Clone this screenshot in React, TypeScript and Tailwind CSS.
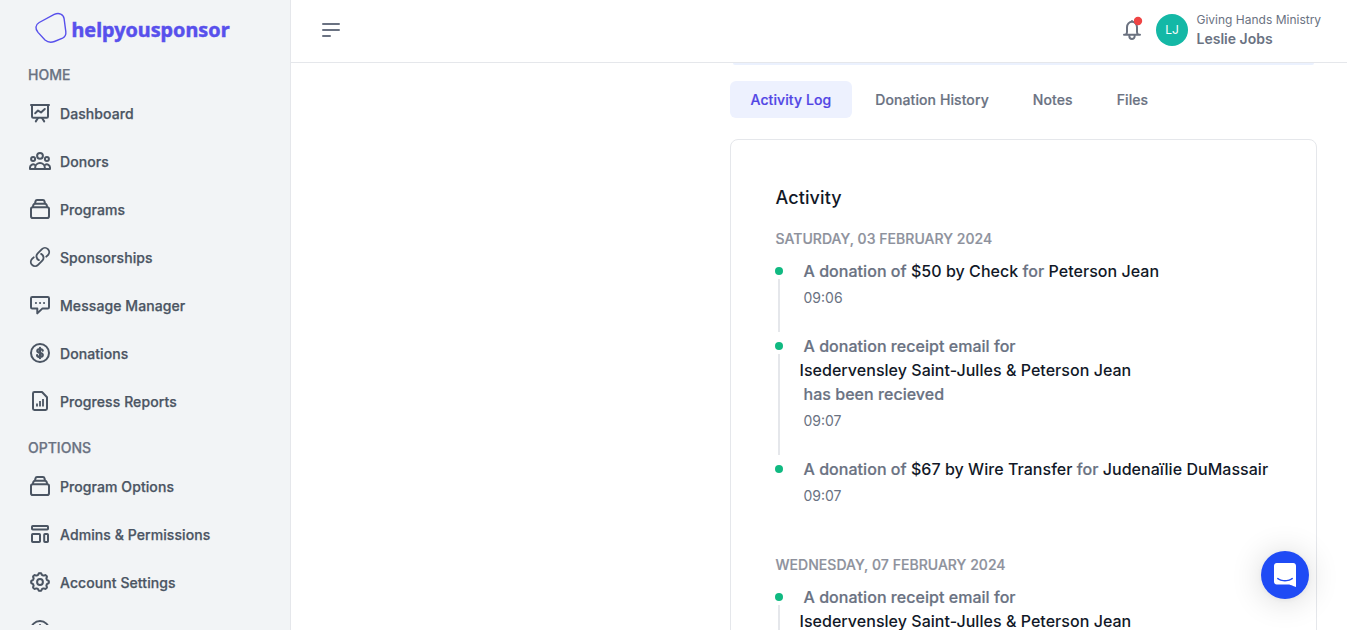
import React from "react";

type IconProps = { children: React.ReactNode };

function Icon({ children }: IconProps) {
  return (
    <svg
      className="h-6 w-6 shrink-0"
      viewBox="0 0 24 24"
      fill="none"
      stroke="currentColor"
      strokeWidth="2"
      strokeLinecap="round"
      strokeLinejoin="round"
    >
      {children}
    </svg>
  );
}

// Outline of an eight-toothed gear centred on (12, 12).
function gearPath() {
  const points: string[] = [];
  for (let i = 0; i < 160; i++) {
    const a = (i / 160) * Math.PI * 2;
    const r = 8.05 + 0.85 * Math.tanh(2.2 * Math.cos(8 * a));
    points.push(`${(12 + r * Math.cos(a)).toFixed(2)} ${(12 + r * Math.sin(a)).toFixed(2)}`);
  }
  return `M${points.join("L")}Z`;
}

const stackIcon = (
  <Icon>
    <rect x="3" y="10.2" width="18" height="10.8" rx="1.8" />
    <path d="M4.9 9.8 5.4 7.8Q5.8 6.7 6.9 6.7H17.1Q18.2 6.7 18.6 7.8L19.1 9.8" />
    <path d="M7.1 6.3 7.5 4.2Q7.8 3 9 3H15Q16.2 3 16.5 4.2L16.9 6.3" />
  </Icon>
);

const home = [
  {
    label: "Dashboard",
    icon: (
      <Icon>
        <path d="M3 4H21" />
        <path d="M4 4V15.6Q4 16.8 5.2 16.8H18.8Q20 16.8 20 15.6V4" />
        <path d="M10 17 7.8 20.4M14 17 16.2 20.4" />
        <path d="M7.2 12.2 10 9.6 13 11.4 16.8 8" />
      </Icon>
    ),
  },
  {
    label: "Donors",
    icon: (
      <Icon>
        <circle cx="12" cy="6.8" r="2.9" />
        <circle cx="5.1" cy="10" r="2" />
        <circle cx="18.9" cy="10" r="2" />
        <path d="M7.2 20V18.6A4.8 4.6 0 0 1 16.8 18.6V20Z" />
        <path d="M7.2 20H2V18.6A3.2 3.2 0 0 1 6.8 15.8M16.8 20H22V18.6A3.2 3.2 0 0 0 17.2 15.8" />
      </Icon>
    ),
  },
  { label: "Programs", icon: stackIcon },
  {
    label: "Sponsorships",
    icon: (
      <Icon>
        <g transform="translate(12 12) scale(0.94) translate(-12 -12)">
          <path d="M13.19 8.688a4.5 4.5 0 0 1 1.242 7.244l-4.5 4.5a4.5 4.5 0 0 1-6.364-6.364l1.757-1.757m13.35-.622 1.757-1.757a4.5 4.5 0 0 0-6.364-6.364l-4.5 4.5a4.5 4.5 0 0 0 1.242 7.244" />
        </g>
      </Icon>
    ),
  },
  {
    label: "Message Manager",
    icon: (
      <Icon>
        <path d="M4.2 4H19.8Q21 4 21 5.2V14.2Q21 15.4 19.8 15.4H14.5L9.3 20.4V15.4H4.2Q3 15.4 3 14.2V5.2Q3 4 4.2 4Z" />
        <path d="M7.9 9.9H8M12 9.9H12.1M16 9.9H16.1" />
      </Icon>
    ),
  },
  {
    label: "Donations",
    icon: (
      <Icon>
        <circle cx="12" cy="12" r="9" />
        <path
          d="M14.8 9.7C14.6 8.6 13.6 8 12 8C10.3 8 9.3 8.7 9.3 9.9C9.3 12.5 14.8 11.3 14.8 14.1C14.8 15.3 13.7 16 12 16C10.3 16 9.3 15.3 9.1 14.2M12 6.8V17.2"
          strokeWidth="2.2"
        />
      </Icon>
    ),
  },
  {
    label: "Progress Reports",
    icon: (
      <Icon>
        <path d="M6.4 3H14L19 8.2V19.6Q19 21 17.6 21H6.4Q5 21 5 19.6V4.4Q5 3 6.4 3Z" />
        <path d="M9 14.4V17.6M12 12V17.6M15 10V17.6" strokeLinecap="butt" strokeWidth="1.8" />
      </Icon>
    ),
  },
];

const options = [
  { label: "Program Options", icon: stackIcon },
  {
    label: "Admins & Permissions",
    icon: (
      <Icon>
        <rect x="4" y="4" width="16" height="3.5" rx="0.8" />
        <rect x="4" y="12" width="8" height="8" rx="0.8" />
        <rect x="16.2" y="12" width="3.8" height="8" rx="0.8" />
      </Icon>
    ),
  },
  {
    label: "Account Settings",
    icon: (
      <Icon>
        <path d={gearPath()} />
        <circle cx="12" cy="12" r="2.9" />
      </Icon>
    ),
  },
  {
    label: "",
    icon: (
      <Icon>
        <circle cx="12" cy="12" r="9" />
        <path d="M12 7V7.1M12 11V17" />
      </Icon>
    ),
  },
];

type NavProps = { items: { label: string; icon: React.ReactNode }[] };

function Nav({ items }: NavProps) {
  return (
    <ul>
      {items.map((item) => (
        <li key={item.label} className="flex h-12 items-center gap-2 text-[#4b5563]">
          <span className="-mt-0.5">{item.icon}</span>
          <span className="text-sm font-medium tracking-[0.08px] [-webkit-text-stroke:0.25px]">{item.label}</span>
        </li>
      ))}
    </ul>
  );
}

function Sidebar() {
  return (
    <aside className="h-[630px] w-[291px] shrink-0 border-r border-gray-200 bg-[#f2f4f6]">
      <div className="h-[625px] overflow-hidden pl-7">
        <div className="flex h-[65px] items-start pt-3 pl-[7px]">
          <svg className="overflow-visible" width="200" height="36" viewBox="0 0 200 36" fill="none">
            <path
              d="M19.2 2.4C24 0.3 28.4 2.2 29.1 6.6L30.8 19.6C31.2 22.8 30.4 24.7 27.6 26.1L19.4 29.5C15.6 31 12.8 30.4 10 28L3 20.4C0 16.8 0.2 12.8 4.2 10.5Z"
              stroke="#5850ec"
              strokeWidth="1.4"
            />
            <text
              x="36.5"
              y="24.5"
              textLength="158"
              lengthAdjust="spacingAndGlyphs"
              fill="#5850ec"
              stroke="#5850ec"
              strokeWidth="0.5"
              className="font-['Noto_Sans',sans-serif] text-[20px] font-bold"
            >
              helpyousponsor
            </text>
          </svg>
        </div>
        <h2 className="text-sm leading-5 font-medium text-gray-500 [-webkit-text-stroke:0.25px]">HOME</h2>
        <div className="mt-[5px]">
          <Nav items={home} />
        </div>
        <h2 className="mt-[12px] text-sm leading-5 font-medium text-gray-500 [-webkit-text-stroke:0.25px]">OPTIONS</h2>
        <div className="mt-[5px]">
          <Nav items={options} />
        </div>
      </div>
    </aside>
  );
}

function Header() {
  return (
    <header className="flex h-[63px] shrink-0 items-start justify-between border-b border-gray-200 pl-[28px]">
      <svg className="mt-[18px] h-6 w-6 text-gray-500" viewBox="0 0 24 24" stroke="currentColor" strokeWidth="2" strokeLinecap="round">
        <path d="M4 6H20M4 12H20M4 18H11" />
      </svg>
      <div className="flex items-start">
        <svg className="mt-[14px] mr-[12px] h-7 w-6" viewBox="0 0 24 28" fill="none" stroke="#6b7280" strokeWidth="2" strokeLinecap="round" strokeLinejoin="round">
          <path d="M4 20.8H20M5.9 20.6Q7 19.6 7 18V13.2A5 5.4 0 0 1 17 13.2V18Q17 19.6 18.1 20.6M12 7.7V7M9.4 21.4V22.6A2.6 2.4 0 0 0 14.6 22.6V21.4" />
          <circle cx="18" cy="7" r="4.2" fill="#ef4444" stroke="none" />
        </svg>
        <div className="mt-[14px] flex h-8 w-8 items-center justify-center rounded-full bg-[#14b8a6] text-xs text-white">
          LJ
        </div>
        <div className="mt-[10px] ml-[8.5px] w-[150.5px] text-gray-500">
          <div className="text-xs leading-5">Giving Hands Ministry</div>
          <div className="text-sm leading-[18px] font-semibold">Leslie Jobs</div>
        </div>
      </div>
    </header>
  );
}

type EntryProps = { time?: string; line?: boolean; children: React.ReactNode };

function Entry({ time, line = true, children }: EntryProps) {
  return (
    <li className="flex gap-[20.5px]">
      <div className="flex w-2 shrink-0 flex-col items-center">
        <span className="mt-2 h-2 w-2 shrink-0 rounded-full bg-[#10b981]" />
        {line && <span className="mt-1 mb-0.5 w-0.5 grow bg-gray-200" />}
      </div>
      <div className="pb-[26px]">
        <div className="text-base leading-6 font-medium tracking-[0.04px] text-gray-500 [-webkit-text-stroke:0.2px]">{children}</div>
        <div className="mt-[5px] text-sm leading-5 text-gray-500">{time}</div>
      </div>
    </li>
  );
}

function Em({ children }: { children: React.ReactNode }) {
  return <span className="text-[#111827] [-webkit-text-stroke:0]">{children}</span>;
}

function Receipt() {
  return (
    <>
      <div>A donation receipt email for</div>
      <div className="-ml-1 text-[#111827] [-webkit-text-stroke:0]">Isedervensley Saint-Julles &amp; Peterson Jean</div>
      <div>has been recieved</div>
    </>
  );
}

const tabs = ["Activity Log", "Donation History", "Notes", "Files"];

export default function App() {
  return (
    <div className="flex h-[630px] w-[1347px] overflow-hidden bg-white font-['Inter',sans-serif]">
      <Sidebar />
      <div className="flex min-w-0 grow flex-col">
        <Header />
        <main className="flex min-h-0 grow flex-col overflow-hidden pr-[30px] pl-[439px]">
          <div className="mr-[3px] ml-[3px] h-[2px] shrink-0 rounded-b-sm bg-[#ebf1fe]" />
          <nav className="mt-4 flex shrink-0 gap-[3px] text-sm font-medium tracking-[0.09px] [-webkit-text-stroke:0.2px]">
            {tabs.map((tab, i) => (
              <button
                key={tab}
                className={
                  i === 0
                    ? "h-[37px] rounded-md bg-[#edf1fe] px-[20.5px] text-[#5145e5]"
                    : "h-[37px] rounded-md px-[20.5px] text-gray-500"
                }
              >
                {tab}
              </button>
            ))}
          </nav>
          <section className="mt-[21px] h-[700px] shrink-0 rounded-lg border border-gray-200 pt-[44px] pl-[44px]">
            <h1 className="ml-[0.5px] text-lg leading-7 font-medium tracking-[0.1px] text-[#111827]">Activity</h1>
            <h2 className="mt-[17px] ml-[0.5px] text-sm leading-5 font-medium tracking-[0.04px] text-[#8d919c] [-webkit-text-stroke:0.2px]">SATURDAY, 03 FEBRUARY 2024</h2>
            <ul className="mt-[10px]">
              <Entry time="09:06">
                A donation of <Em>$50 by Check</Em> for <Em>Peterson Jean</Em>
              </Entry>
              <Entry time="09:07">
                <Receipt />
              </Entry>
              <Entry time="09:07" line={false}>
                A donation of <Em>$67 by Wire Transfer</Em> for <Em>Judenaïlie DuMassair</Em>
              </Entry>
            </ul>
            <h2 className="mt-[23px] ml-[0.5px] text-sm leading-5 font-medium tracking-[0.04px] text-[#8d919c] [-webkit-text-stroke:0.2px]">WEDNESDAY, 07 FEBRUARY 2024</h2>
            <ul className="mt-[10px]">
              <Entry time="09:07">
                <Receipt />
              </Entry>
            </ul>
          </section>
        </main>
      </div>
      <button className="fixed right-[38px] bottom-[31px] flex h-12 w-12 items-center justify-center rounded-full bg-[#1f4bf5] shadow-[0_1px_6px_rgba(0,0,0,0.06),0_2px_32px_rgba(0,0,0,0.16)]">
        <svg width="22" height="24" viewBox="0 0 28 32" preserveAspectRatio="none" fill="#fff">
          <path d="M28 32s-4.714-1.855-8.527-3.34H3.437C1.54 28.66 0 27.026 0 25.013V3.644C0 1.633 1.54 0 3.437 0h21.125c1.898 0 3.437 1.632 3.437 3.645v18.404H28V32zm-4.139-11.982a.88.88 0 00-1.292-.105c-.03.026-3.015 2.681-8.57 2.681-5.486 0-8.517-2.636-8.571-2.684a.88.88 0 00-1.29.107 1.01 1.01 0 00-.219.708.992.992 0 00.318.664c.142.128 3.537 3.15 9.762 3.15 6.226 0 9.621-3.022 9.763-3.15a.992.992 0 00.317-.664 1.01 1.01 0 00-.218-.707z" />
        </svg>
      </button>
    </div>
  );
}
